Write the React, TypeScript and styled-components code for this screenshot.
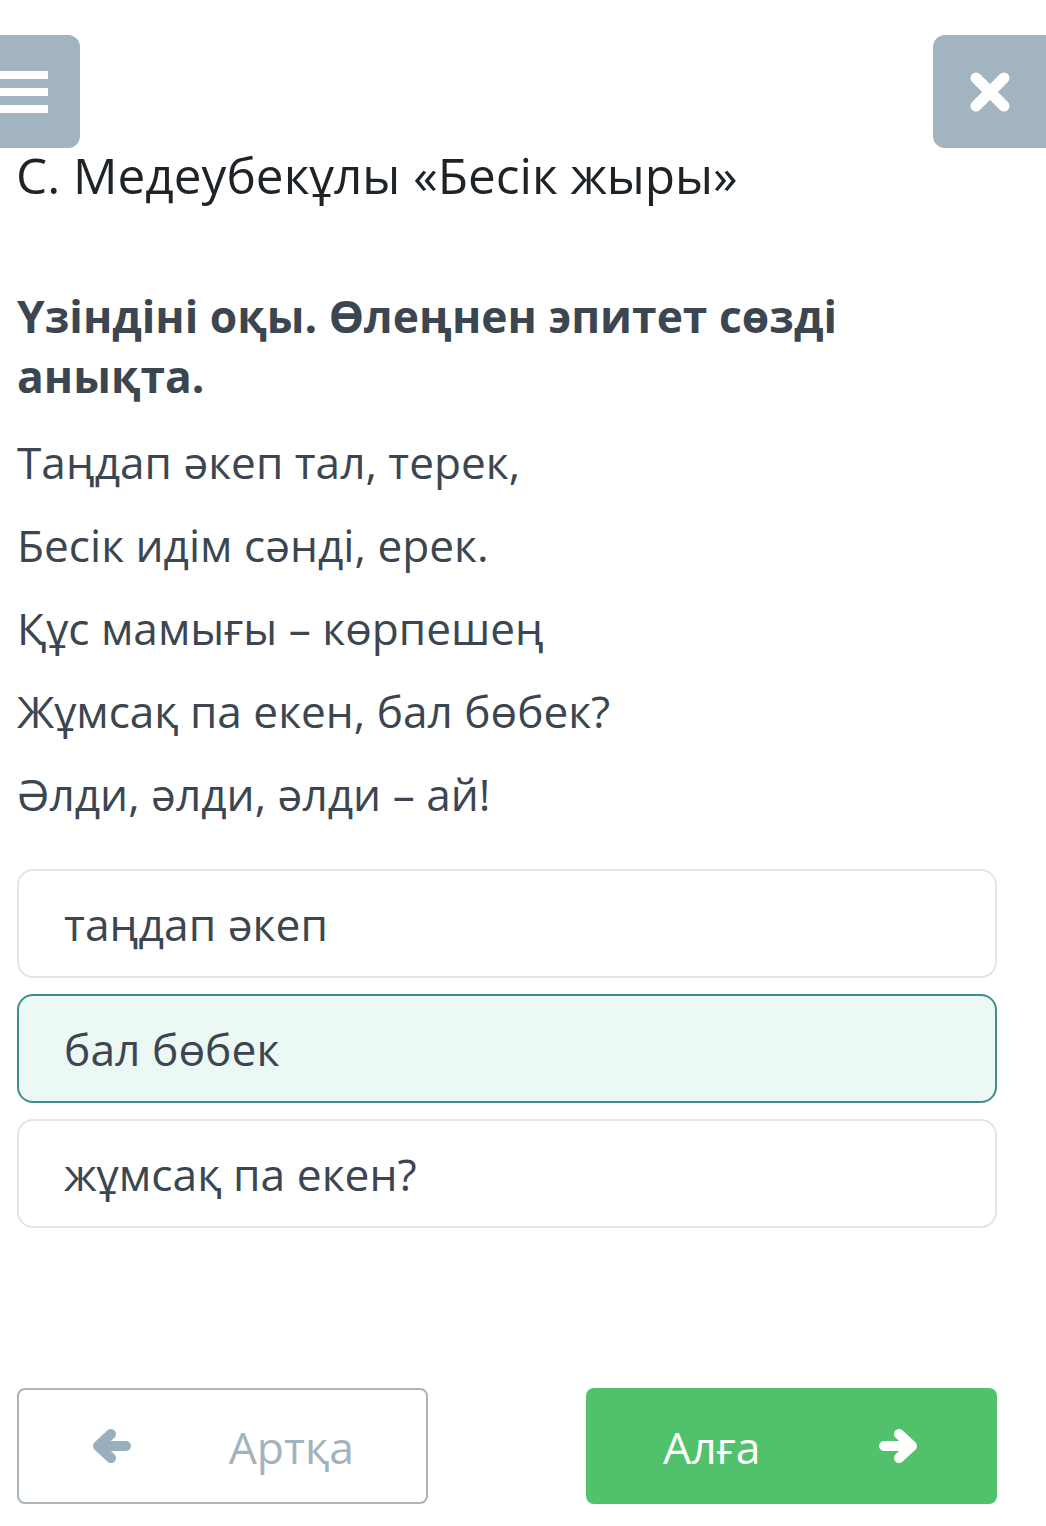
import styled, { createGlobalStyle } from "styled-components";

const GlobalStyle = createGlobalStyle`
  html, body {
    margin: 0;
    padding: 0;
    background: #ffffff;
  }
  body {
    font-family: "Open Sans", "Noto Sans", sans-serif;
    color: #3c4650;
  }
`;

const Page = styled.div`
  width: 1046px;
  min-height: 1526px;
  box-sizing: border-box;
  padding: 35px 0 0;
  display: flex;
  flex-direction: column;
  overflow: hidden;
`;

const TopBar = styled.div`
  display: flex;
  justify-content: space-between;
  height: 113px;
`;

const IconButton = styled.button<{ $side: "left" | "right" }>`
  width: 126px;
  height: 113px;
  flex: none;
  border: none;
  border-radius: 12px;
  background: #a1b4c0;
  display: flex;
  align-items: center;
  justify-content: center;
  margin-left: ${(p) => (p.$side === "left" ? "-46px" : "0")};
  margin-right: ${(p) => (p.$side === "right" ? "-13px" : "0")};
  padding: ${(p) => (p.$side === "left" ? "0 32px 0 13px" : "0 13px 0 0")};
  cursor: pointer;
`;

const Burger = styled.span`
  display: flex;
  flex-direction: column;
  gap: 9px;
  span {
    display: block;
    width: 81px;
    height: 8px;
    background: #ffffff;
  }
`;

const Content = styled.main`
  padding: 0 49px 0 17px;
  display: flex;
  flex-direction: column;
`;

const Title = styled.h1`
  margin: -4px 0 0 -1px;
  font-size: 49.5px;
  font-weight: 400;
  line-height: 62px;
  color: #1e2327;
`;

const Question = styled.h2`
  margin: 80px 0 0;
  font-size: 44.4px;
  font-weight: 700;
  line-height: 60px;
  color: #3c4650;
`;

const Poem = styled.div`
  margin-top: 15px;
  display: flex;
  flex-direction: column;
`;

const Line = styled.p`
  margin: 0;
  font-size: 44.2px;
  line-height: 83px;
  color: #3c4650;
`;

const Options = styled.div`
  margin-top: 33px;
  display: flex;
  flex-direction: column;
  gap: 16px;
`;

const Option = styled.div<{ $selected?: boolean }>`
  height: 109px;
  box-sizing: border-box;
  border-radius: 16px;
  border: 2px solid ${(p) => (p.$selected ? "#3f8f89" : "#e2e5e8")};
  background: ${(p) => (p.$selected ? "#ebf8f3" : "#ffffff")};
  display: flex;
  align-items: center;
  padding-left: 45px;
  font-size: 44.4px;
  color: #3c4650;
`;

const Footer = styled.div`
  margin-top: 160px;
  display: flex;
  justify-content: space-between;
`;

const NavButton = styled.button<{ $primary?: boolean }>`
  width: 411px;
  height: 116px;
  box-sizing: border-box;
  border-radius: 8px;
  border: ${(p) => (p.$primary ? "none" : "2px solid #aab4bb")};
  background: ${(p) => (p.$primary ? "#51c26b" : "#ffffff")};
  color: ${(p) => (p.$primary ? "#ffffff" : "#a3b3bd")};
  font-family: inherit;
  font-size: 44.5px;
  display: flex;
  align-items: center;
  justify-content: space-between;
  padding: ${(p) => (p.$primary ? "0 78px 0 77px" : "0 72px 0 72px")};
  cursor: pointer;
`;

const CloseGlyph = () => (
  <svg width="44" height="44" viewBox="0 0 44 44">
    <path
      d="M8 8 L36 36 M36 8 L8 36"
      stroke="#ffffff"
      strokeWidth="11"
      strokeLinecap="round"
    />
  </svg>
);

const Arrow = ({ dir, color }: { dir: "left" | "right"; color: string }) => (
  <svg
    width="40"
    height="36"
    viewBox="0 0 40 36"
    style={{ transform: dir === "right" ? "scaleX(-1)" : undefined }}
  >
    <path
      d="M35 18 H8 M20 6 L7 18 L20 30"
      fill="none"
      stroke={color}
      strokeWidth="10"
      strokeLinecap="round"
      strokeLinejoin="round"
    />
  </svg>
);

const poem = [
  "Таңдап әкеп тал, терек,",
  "Бесік идім сәнді, ерек.",
  "Құс мамығы – көрпешең",
  "Жұмсақ па екен, бал бөбек?",
  "Әлди, әлди, әлди – ай!",
];

const options = [
  { text: "таңдап әкеп", selected: false },
  { text: "бал бөбек", selected: true },
  { text: "жұмсақ па екен?", selected: false },
];

export default function App() {
  return (
    <Page>
      <GlobalStyle />
      <TopBar>
        <IconButton $side="left" aria-label="menu">
          <Burger>
            <span />
            <span />
            <span />
          </Burger>
        </IconButton>
        <IconButton $side="right" aria-label="close">
          <CloseGlyph />
        </IconButton>
      </TopBar>
      <Content>
        <Title>С. Медеубекұлы «Бесік жыры»</Title>
        <Question>
          Үзіндіні оқы. Өлеңнен эпитет сөзді
          <br />
          анықта.
        </Question>
        <Poem>
          {poem.map((l) => (
            <Line key={l}>{l}</Line>
          ))}
        </Poem>
        <Options>
          {options.map((o) => (
            <Option key={o.text} $selected={o.selected}>
              {o.text}
            </Option>
          ))}
        </Options>
        <Footer>
          <NavButton>
            <Arrow dir="left" color="#9aafbd" />
            <span>Артқа</span>
          </NavButton>
          <NavButton $primary>
            <span>Алға</span>
            <Arrow dir="right" color="#ffffff" />
          </NavButton>
        </Footer>
      </Content>
    </Page>
  );
}
